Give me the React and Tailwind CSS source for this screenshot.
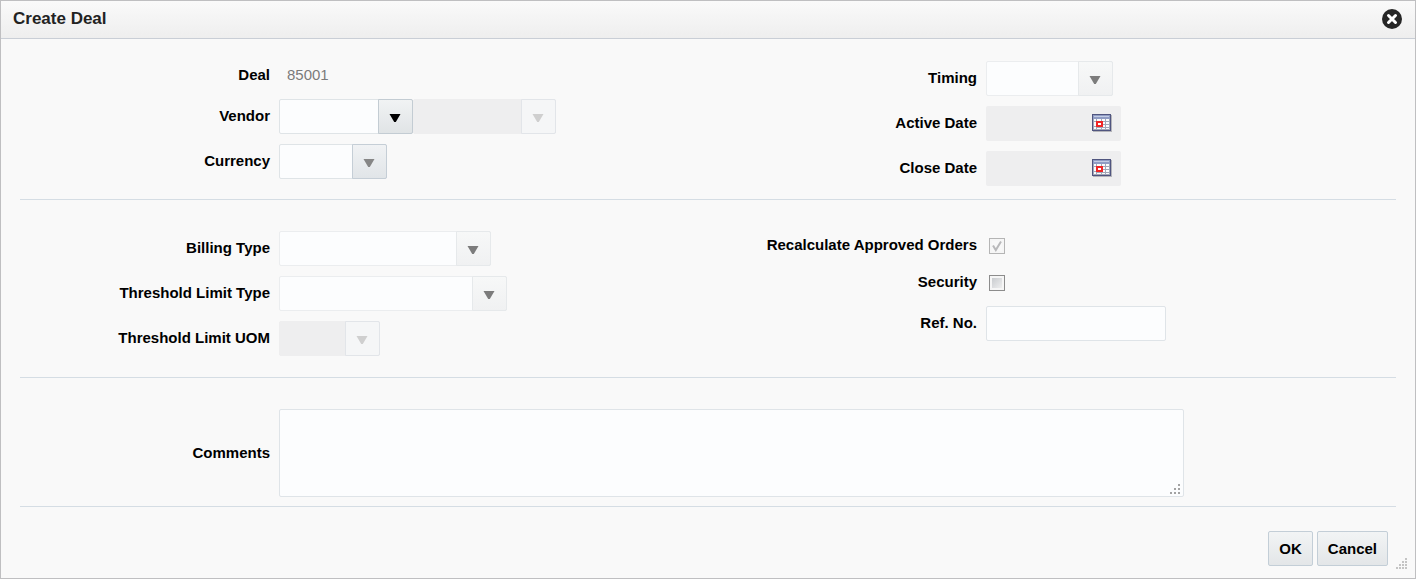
import { useState } from 'react';

const TONES = {
  strong: {
    field: 'bg-[#fcfdfe] border-[#dfe4e7]',
    button: 'border-[#c3ccd3] bg-linear-to-b from-[#f1f3f4] to-[#e0e4e6]',
    arrow: 'text-black',
  },
  normal: {
    field: 'bg-[#fcfdfe] border-[#dfe4e7]',
    button: 'border-[#c5ced6] bg-linear-to-b from-[#f0f2f4] to-[#e1e5e8]',
    arrow: 'text-[#868686]',
  },
  light: {
    field: 'bg-[#fcfdfe] border-[#ebedef]',
    button: 'border-[#e6e9eb] bg-linear-to-b from-[#f7f8f8] to-[#f0f1f2]',
    arrow: 'text-[#7c7c7c]',
  },
  disabled: {
    field: 'bg-[#eeeeef] border-[#eeeeef]',
    button: 'border-[#e2e5e9] bg-[#f5f6f7]',
    arrow: 'text-[#cfcfcf]',
  },
};

function Field({ label, htmlFor, labelWidth, height = 'h-[35px]', children }) {
  return (
    <div className={`flex items-center gap-[9px] ${height}`}>
      <label htmlFor={htmlFor} className={`shrink-0 pb-px text-right font-bold ${labelWidth}`}>
        {label}
      </label>
      {children}
    </div>
  );
}

const LeftField = props => <Field labelWidth="w-[250px]" {...props} />;
const RightField = props => <Field labelWidth="w-[269px]" {...props} />;

function Dropdown({ id, width, tone = 'light', ...rest }) {
  const t = TONES[tone];
  return (
    <div className={`relative h-[35px] ${width}`}>
      <select
        id={id}
        disabled={tone === 'disabled'}
        className={`h-full w-full appearance-none rounded-xs border pl-2 pr-10 opacity-100 ${t.field}`}
        {...rest}
      />
      <span className={`pointer-events-none absolute inset-y-0 right-0 flex w-[35px] items-center justify-center rounded-r-xs border pr-0.5 ${t.button}`}>
        <svg width="12" height="8" viewBox="0 0 12 8" className={`mt-0.5 ${t.arrow}`} aria-hidden="true">
          <path d="M0.5 0h11L6.800 8H5.200z" fill="currentColor" />
        </svg>
      </span>
    </div>
  );
}

function CalendarIcon() {
  return (
    <svg width="20" height="18" viewBox="0 0 20 18" aria-hidden="true">
      <rect x="1" y="1" width="19" height="17" fill="#b4b4ba" />
      <rect width="19" height="17" fill="#50557f" />
      <rect x="1" y="1" width="17" height="4" fill="#8f9cc4" />
      <rect x="2" y="2" width="15" height="1" fill="#c3cce4" />
      <rect x="1" y="5" width="17" height="11" fill="#a3a8b8" />
      <g fill="#fafbfd">
        <path d="M2 5h2v2H2zM5 5h4v2H5zM10 5h3v2h-3zM14 5h3v2h-3z" />
        <path d="M2 8h2v4H2zM11 8h2v2h-2zM14 8h3v2h-3z" />
        <path d="M11 11h2v2h-2zM14 11h3v2h-3z" />
        <path d="M2 13h2v2H2zM5 14h4v1H5zM10 14h3v1h-3zM14 14h3v1h-3z" />
      </g>
      <rect x="5" y="8" width="5" height="4" fill="#fff" stroke="#f02626" strokeWidth="2" />
    </svg>
  );
}

function DateField({ id, label }) {
  return (
    <div className="flex h-[35px] w-[135px] items-center rounded-xs bg-[#eeeeef] pr-[9px]">
      <input id={id} type="text" disabled className="h-full min-w-0 flex-1 bg-transparent px-2" />
      <button type="button" aria-label={`Select ${label}`} className="shrink-0 pb-0.5">
        <CalendarIcon />
      </button>
    </div>
  );
}

function Checkbox({ id, disabled, ...rest }) {
  return (
    <span className="relative ml-[3px] flex">
      <input
        id={id}
        type="checkbox"
        disabled={disabled}
        className={`peer size-4 appearance-none border shadow-[inset_0_0_0_2px_#f6f6f6] ${
          disabled ? 'border-[#b5b5b5] bg-[#f8f8f8]' : 'border-[#8c8c8c] bg-linear-to-br from-[#c2c5c9] to-[#f6f6f6]'
        }`}
        {...rest}
      />
      <svg
        width="16"
        height="16"
        viewBox="0 0 16 16"
        aria-hidden="true"
        className="pointer-events-none invisible absolute inset-0 peer-checked:visible"
      >
        <path d="M4 7.500l2.800 4.500L12 3.500" fill="none" stroke="#b9b9bb" strokeWidth="2" />
      </svg>
    </span>
  );
}

// Rows of dots that grow towards the bottom right corner
function Grip({ size, step, className }) {
  const count = Math.ceil(size / step);
  const dots = [];
  for (let row = 0; row < count; row++) {
    for (let col = count - 1 - row; col < count; col++) {
      dots.push(<rect key={`${row}-${col}`} x={col * step} y={row * step} width="2" height="2" />);
    }
  }
  return (
    <svg width={size} height={size} className={`pointer-events-none absolute ${className}`} aria-hidden="true">
      {dots}
    </svg>
  );
}

function DialogButton({ children }) {
  return (
    <button
      type="button"
      className="h-[35px] rounded-xs border border-[#c3ced7] bg-linear-to-b from-[#f2f4f5] to-[#e3e6e8] px-2.5 font-bold"
    >
      {children}
    </button>
  );
}

export default function App() {
  const [security, setSecurity] = useState(false);
  const [refNo, setRefNo] = useState('');
  const [comments, setComments] = useState('');

  return (
    <div
      role="dialog"
      aria-labelledby="dialog-title"
      className="relative border border-[#bfbfc1] bg-[#f9f9f9] font-['Liberation_Sans',Arial,sans-serif] text-[15px] leading-5 text-black"
    >
      <header className="flex h-[38px] items-center justify-between border-b border-[#c9ced6] bg-linear-to-b from-[#fafafa] to-[#eeeeee] pl-3 pr-[13px]">
        <h1 id="dialog-title" className="pb-0.5 text-[17px] font-bold text-[#222222]">Create Deal</h1>
        <button type="button" aria-label="Close" className="pb-0.5">
          <svg width="20" height="20" viewBox="0 0 20 20" aria-hidden="true">
            <circle cx="10" cy="10" r="10" fill="#262626" />
            <path d="M6.500 6.500l7 7M13.500 6.500l-7 7" stroke="#fff" strokeWidth="3" strokeLinecap="round" />
          </svg>
        </button>
      </header>

      <form className="px-[19px]">
        <section className="grid grid-cols-2 border-b border-[#d5dde4] pt-[22px] pb-[13px]">
          <div className="flex flex-col gap-2.5">
            <LeftField label="Deal" htmlFor="deal" height="h-7">
              <output id="deal" className="pl-2 text-[#7b7b7b]">85001</output>
            </LeftField>
            <LeftField label="Vendor" htmlFor="vendor">
              <div className="flex">
                <Dropdown id="vendor" width="w-[134px]" tone="strong" />
                <Dropdown id="vendor-name" width="w-[143px]" tone="disabled" aria-label="Vendor name" />
              </div>
            </LeftField>
            <LeftField label="Currency" htmlFor="currency">
              <Dropdown id="currency" width="w-[108px]" tone="normal" />
            </LeftField>
          </div>
          <div className="flex flex-col gap-2.5">
            <RightField label="Timing" htmlFor="timing">
              <Dropdown id="timing" width="w-[127px]" />
            </RightField>
            <RightField label="Active Date" htmlFor="active-date">
              <DateField id="active-date" label="Active Date" />
            </RightField>
            <RightField label="Close Date" htmlFor="close-date">
              <DateField id="close-date" label="Close Date" />
            </RightField>
          </div>
        </section>

        <section className="grid grid-cols-2 border-b border-[#d5dde4] pt-[31px] pb-[21px]">
          <div className="flex flex-col gap-2.5">
            <LeftField label="Billing Type" htmlFor="billing-type">
              <Dropdown id="billing-type" width="w-[212px]" />
            </LeftField>
            <LeftField label="Threshold Limit Type" htmlFor="threshold-type">
              <Dropdown id="threshold-type" width="w-[228px]" />
            </LeftField>
            <LeftField label="Threshold Limit UOM" htmlFor="threshold-uom">
              <Dropdown id="threshold-uom" width="w-[101px]" tone="disabled" />
            </LeftField>
          </div>
          <div className="flex flex-col gap-2">
            <RightField label="Recalculate Approved Orders" htmlFor="recalculate" height="h-[29px]">
              <Checkbox id="recalculate" disabled defaultChecked />
            </RightField>
            <RightField label="Security" htmlFor="security" height="h-[29px]">
              <Checkbox id="security" checked={security} onChange={e => setSecurity(e.target.checked)} />
            </RightField>
            <RightField label="Ref. No." htmlFor="ref-no" height="h-[37px]">
              <input
                id="ref-no"
                type="text"
                value={refNo}
                onChange={e => setRefNo(e.target.value)}
                className="h-[35px] w-[180px] rounded-xs border border-[#dfe4e8] bg-[#fcfdfe] px-2"
              />
            </RightField>
          </div>
        </section>

        <section className="border-b border-[#d5dde4] pt-[31px] pb-[9px]">
          <LeftField label="Comments" htmlFor="comments" height="h-[88px]">
            <div className="relative mr-[212px] h-full flex-1">
              <textarea
                id="comments"
                value={comments}
                onChange={e => setComments(e.target.value)}
                className="block h-full w-full resize-none rounded-xs border border-[#dfe4e8] bg-[#fcfdfe] p-2"
              />
              <Grip size={11} step={4} className="right-[3px] bottom-0.5 fill-[#a3a3a3]" />
            </div>
          </LeftField>
        </section>
      </form>

      <footer className="flex justify-end gap-1 pt-6 pr-[27px] pb-3">
        <DialogButton>OK</DialogButton>
        <DialogButton>Cancel</DialogButton>
      </footer>
      <Grip size={12} step={3} className="right-[7px] bottom-2 fill-[#c4c4c4]" />
    </div>
  );
}
